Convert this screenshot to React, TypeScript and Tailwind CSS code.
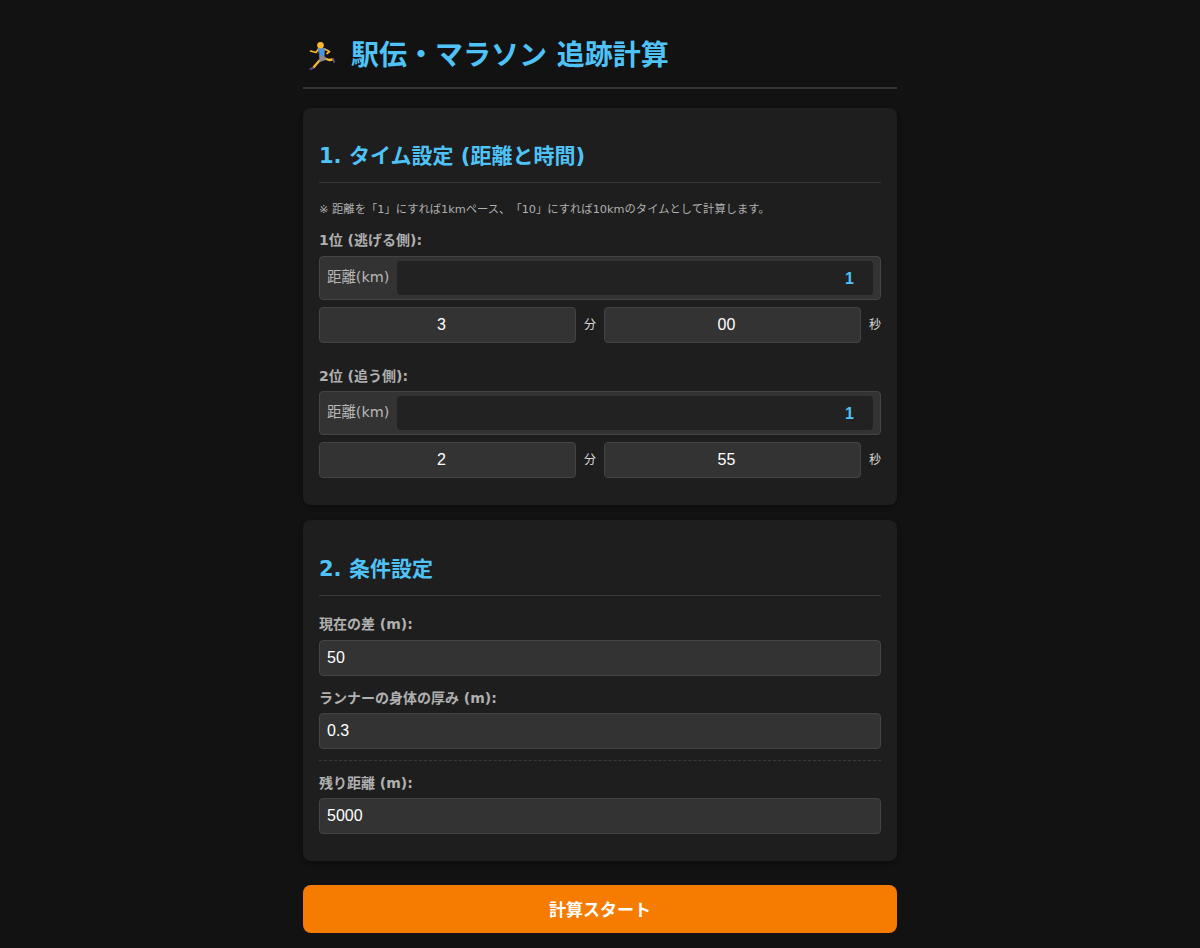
const FONT = "font-['DejaVu_Sans','Noto_Sans_CJK_JP',sans-serif]";
const NUM = "font-['Liberation_Sans','Noto_Sans_CJK_JP',sans-serif]";

function Label({ children, className = "mb-[5px]" }: { children: React.ReactNode; className?: string }) {
  return <div className={`h-5 text-[14px] leading-5 font-bold text-[#b0b0b0] ${className}`}>{children}</div>;
}

function TextBox({ value }: { value: string }) {
  return (
    <input
      readOnly
      value={value}
      className={`h-[36px] w-full rounded border border-[#444] bg-[#333] pr-2 pl-[7px] text-[16px] text-white outline-none ${NUM}`}
    />
  );
}

function TimeRow({ min, sec }: { min: string; sec: string }) {
  return (
    <div className="mt-[7px] flex items-center">
      <input
        readOnly
        value={min}
        className={`h-[36px] min-w-0 flex-1 rounded border border-[#444] bg-[#333] pr-3 text-center text-[16px] text-white outline-none ${NUM}`}
      />
      <span className="w-7 text-center text-[12px] text-[#d8d8d8]">分</span>
      <input
        readOnly
        value={sec}
        className={`h-[36px] min-w-0 flex-1 rounded border border-[#444] bg-[#333] pr-3 text-center text-[16px] text-white outline-none ${NUM}`}
      />
      <span className="w-5 text-right text-[12px] text-[#d8d8d8]">秒</span>
    </div>
  );
}

function Runner({ label, min, sec, labelClass }: { label: string; min: string; sec: string; labelClass?: string }) {
  return (
    <div>
      <Label className={labelClass}>{label}</Label>
      <div className="flex h-11 items-center rounded border border-[#444] bg-[#333] pr-[7px] pl-[7px]">
        <span className="w-[70px] shrink-0 text-[14.4px] text-[#b8b8b8]">距離(km)</span>
        <input
          readOnly
          value="1"
          className={`h-[34px] min-w-0 flex-1 rounded bg-[#222] pt-[2px] pr-[19px] text-right text-[16px] font-bold text-[#4fc3f7] outline-none ${NUM}`}
        />
      </div>
      <TimeRow min={min} sec={sec} />
    </div>
  );
}

function Card({ title, className = "pt-[30px]", children }: { title: string; className?: string; children: React.ReactNode }) {
  return (
    <section className={`rounded-lg bg-[#1e1e1e] px-4 pb-[27px] shadow-[0_2px_4px_rgba(0,0,0,0.3)] ${className}`}>
      <h2 className="h-[45px] border-b border-[#3a3a3a] text-[21px] leading-[36px] font-bold text-[#4fc3f7]">{title}</h2>
      {children}
    </section>
  );
}

function RunnerIcon() {
  return (
    <svg viewBox="0 0 28 30" className="mr-4 h-[30px] w-7 shrink-0" fill="none" strokeLinecap="round" strokeLinejoin="round">
      <path d="M3.5 10 9 11.5 11.5 8" stroke="#fbb92d" strokeWidth="1.7" />
      <path d="M17.5 8 22.5 10.5 20 12.5" stroke="#fbb92d" strokeWidth="1.7" />
      <path d="M12.5 19.5 9 23.5 6.5 26.5" stroke="#fbb92d" strokeWidth="2.3" />
      <path d="M18 17.5 22 19 25.5 18.5" stroke="#fbb92d" strokeWidth="2.3" />
      <path d="M6 27 3.5 28" stroke="#5b4a86" strokeWidth="2" />
      <path d="M26.2 18 27 21" stroke="#5b4a86" strokeWidth="2" />
      <path d="M11.5 7.5 17.5 7.5 17 15 13 15Z" fill="#4b93dc" stroke="#4b93dc" strokeWidth="0.8" />
      <path d="M13 15 17 15 19 18.5 13 20.5Z" fill="#8a8799" stroke="#8a8799" strokeWidth="0.8" />
      <circle cx="13.5" cy="4.2" r="3.3" fill="#fbb92d" />
    </svg>
  );
}

export default function App() {
  return (
    <div className={`min-h-[948px] bg-[#121212] ${FONT}`}>
      <main className="mx-auto w-[594px] pt-[19px]">
        <h1 className="flex h-[70px] items-center border-b-2 border-[#333] pt-[5px] pl-1 text-[28px] font-bold text-[#4fc3f7]">
          <RunnerIcon />
          駅伝・マラソン 追跡計算
        </h1>

        <div className="mt-[19px]">
          <Card title="1. タイム設定 (距離と時間)">
            <p className="mt-[19px] mb-[12px] h-4 text-[11.3px] leading-4 text-[#b0b0b0] [text-spacing-trim:space-all]">
              ※ 距離を「1」にすれば1kmペース、「10」にすれば10kmのタイムとして計算します。
            </p>
            <Runner label="1位 (逃げる側):" min="3" sec="00" labelClass="mb-[6px]" />
            <div className="mt-[23px]">
              <Runner label="2位 (追う側):" min="2" sec="55" />
            </div>
          </Card>
        </div>

        <div className="mt-[15px]">
          <Card title="2. 条件設定" className="pt-[31px]">
            <div className="mt-[18px]">
              <Label className="mb-[6px]">現在の差 (m):</Label>
              <TextBox value="50" />
            </div>
            <div className="mt-[12px]">
              <Label>ランナーの身体の厚み (m):</Label>
              <TextBox value="0.3" />
            </div>
            <div className="mt-[11px] border-t border-dashed border-[#3a3a3a] pt-[12px]">
              <Label>残り距離 (m):</Label>
              <TextBox value="5000" />
            </div>
          </Card>
        </div>

        <button className="mt-6 h-12 w-full rounded-lg bg-[#f57c00] pt-1 text-[17px] font-bold text-white">
          計算スタート
        </button>
      </main>
    </div>
  );
}
